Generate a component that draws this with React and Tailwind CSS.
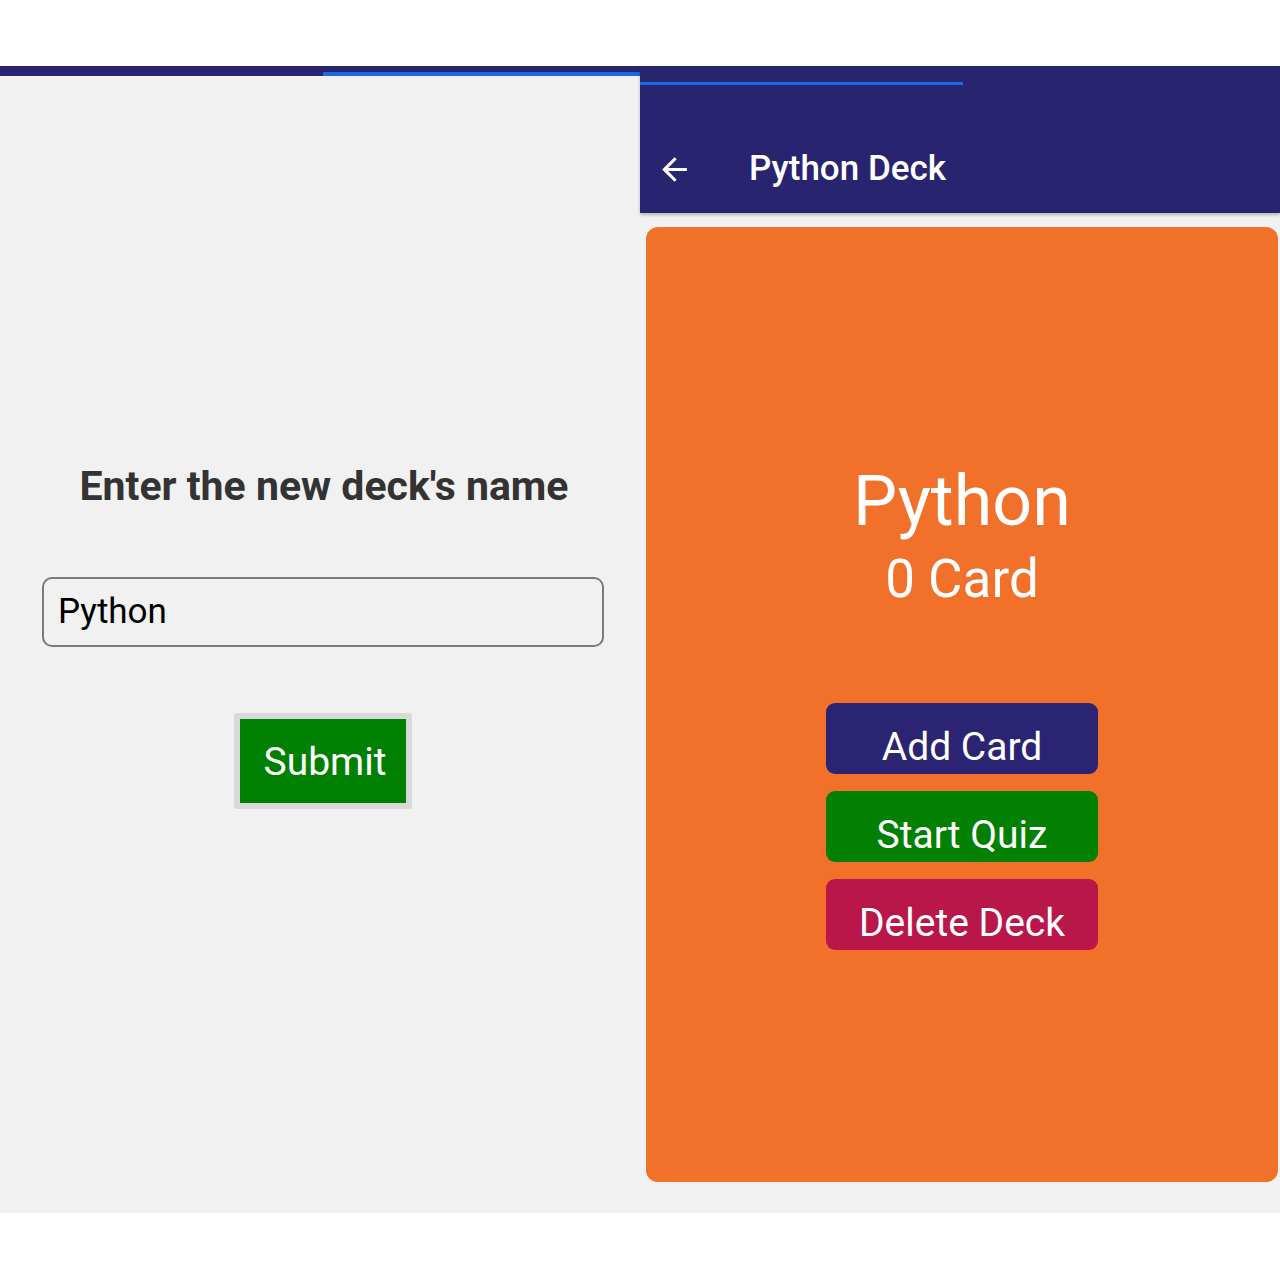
const font = { fontFamily: "Roboto, 'Noto Sans', sans-serif" };

const DeckButton = ({ label, color }) => (
  <button className={`w-[272px] h-[71px] rounded-[9px] text-white text-[39px] leading-none pt-[18px] ${color}`}>
    {label}
  </button>
);

const NewDeck = () => (
  <div className="w-[640px] h-full flex flex-col bg-[#f1f1f1]">
    <div className="h-[10px] bg-[#29246f] flex items-end">
      <div className="ml-[323px] flex-1 h-[4px] bg-[#1b6be0]" />
    </div>
    <div className="flex flex-col items-center pt-[388px]">
      <h1 className="text-[41px] leading-[44px] font-bold text-[#333] ml-[8px]">Enter the new deck's name</h1>
      <div className="mt-[69px] ml-[42px] mr-[36px] self-stretch h-[70px] rounded-[10px] border-2 border-[#7a7a7a] flex items-center pl-[14px]">
        <span className="text-[35px] text-black">Python</span>
      </div>
      <div className="mt-[66px] ml-[6px] border-[6px] border-[#d9d9d9] rounded-[3px]">
        <button className="w-[166px] h-[84px] bg-[#008000] text-white text-[39px] pl-[4px] pt-[2px]">Submit</button>
      </div>
    </div>
  </div>
);

const DeckDetail = () => (
  <div className="w-[640px] h-full flex flex-col bg-[#f1f1f1]">
    <div className="h-[147px] bg-[#29246f] flex flex-col shadow-[0_2px_3px_rgba(0,0,0,0.25)] relative z-10">
      <div className="mt-[16px] w-[323px] h-[3px] bg-[#1b6be0]" />
      <div className="flex items-center mt-[65px] h-[38px]">
        <svg className="ml-[16px] w-[37px] h-[37px]" viewBox="0 0 24 24" fill="white">
          <path d="M20 11H7.83l5.59-5.59L12 4l-8 8 8 8 1.41-1.41L7.83 13H20v-2z" />
        </svg>
        <span className="ml-[56px] text-white text-[35px] font-medium">Python Deck</span>
      </div>
    </div>
    <div className="flex-1 pt-[14px] pl-[6px] pr-[2px] pb-[31px]">
      <div className="h-full rounded-[12px] bg-[#f1702a] flex flex-col items-center">
        <div className="mt-[236px] text-white text-[70px] leading-[76px]">Python</div>
        <div className="mt-[10px] text-white text-[53px] leading-[60px]">0 Card</div>
        <div className="mt-[94px] flex flex-col gap-[17px]">
          <DeckButton label="Add Card" color="bg-[#2a2473]" />
          <DeckButton label="Start Quiz" color="bg-[#018001]" />
          <DeckButton label="Delete Deck" color="bg-[#b9174a]" />
        </div>
      </div>
    </div>
  </div>
);

export default function App() {
  return (
    <div className="w-[1280px] h-[1280px] bg-white flex flex-col" style={font}>
      <div className="h-[66px]" />
      <div className="h-[1147px] flex">
        <NewDeck />
        <DeckDetail />
      </div>
    </div>
  );
}
